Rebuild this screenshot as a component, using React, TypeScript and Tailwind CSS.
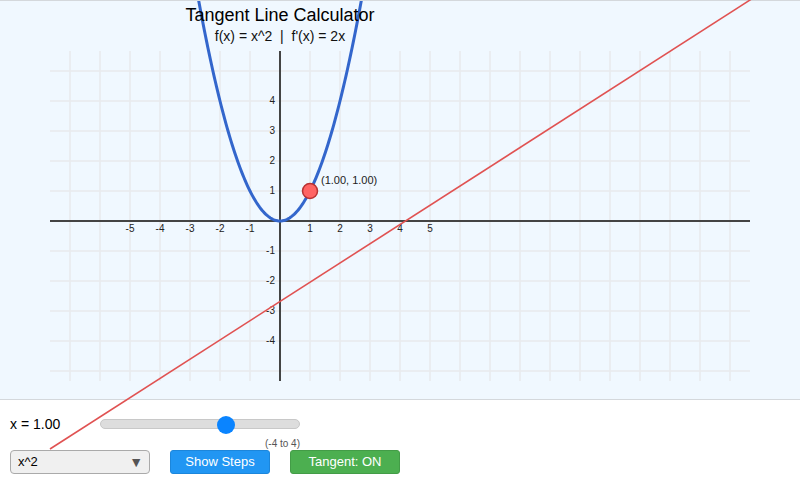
import React from "react";

const OX = 280;
const OY = 220;
const S = 30;

function parabolaPath() {
  const pts: string[] = [];
  for (let x = -2.76; x <= 2.761; x += 0.04) {
    const px = OX + x * S;
    const py = OY - x * x * S;
    pts.push(`${pts.length ? "L" : "M"}${px.toFixed(2)},${py.toFixed(2)}`);
  }
  return pts.join(" ");
}

function Graph() {
  const vLines = [];
  for (let k = -7; k <= 15; k++) vLines.push(OX + k * S);
  const hLines = [];
  for (let k = -5; k <= 5; k++) hLines.push(OY + k * S);
  const xLabels = [-5, -4, -3, -2, -1, 1, 2, 3, 4, 5];
  const yLabels = [4, 3, 2, 1, -1, -2, -3, -4];

  return (
    <svg width="800" height="398" className="block">
      {vLines.map((x) => (
        <line key={"v" + x} x1={x} y1={50} x2={x} y2={380} stroke="#e8eaec" strokeWidth={1.5} />
      ))}
      {hLines.map((y) => (
        <line key={"h" + y} x1={50} y1={y} x2={750} y2={y} stroke="#e8eaec" strokeWidth={1.5} />
      ))}
      <line x1={50} y1={OY} x2={750} y2={OY} stroke="#444" strokeWidth={2} />
      <line x1={OX} y1={50} x2={OX} y2={380} stroke="#444" strokeWidth={2} />
      {xLabels.map((n) => (
        <text key={"xl" + n} x={OX + n * S} y={OY + 11} fontSize={10} textAnchor="middle" fill="#222">
          {n}
        </text>
      ))}
      {yLabels.map((n) => (
        <text key={"yl" + n} x={OX - 5} y={OY - n * S + 3} fontSize={10} textAnchor="end" fill="#222">
          {n}
        </text>
      ))}
      <path d={parabolaPath()} fill="none" stroke="#3366cc" strokeWidth={3} />
      <circle cx={310} cy={190} r={7.5} fill="#ff6464" stroke="#b83232" strokeWidth={1.5} />
      <text x={321} y={182.5} fontSize={11} fill="#222">
        (1.00, 1.00)
      </text>
      <text x={280} y={19.5} fontSize={18} textAnchor="middle" fill="#000">
        Tangent Line Calculator
      </text>
      <text x={280} y={39.5} fontSize={14} textAnchor="middle" fill="#111">
        f(x) = x^2 &nbsp;|&nbsp; f'(x) = 2x
      </text>
    </svg>
  );
}

export default function App() {
  return (
    <div
      className="relative w-[800px] h-[482px] overflow-hidden bg-white"
      style={{ fontFamily: '"Liberation Sans", Arial, sans-serif' }}
    >
      <div className="h-[400px] bg-[#f0f8ff] border-t border-b border-[#d4d8dc]">
        <Graph />
      </div>

      {/* tangent line runs over both the graph and the controls */}
      <svg width="800" height="482" className="absolute inset-0 pointer-events-none">
        <line x1={50} y1={449} x2={751} y2={-0.6} stroke="#e05252" strokeWidth={1.6} />
      </svg>

      <div className="relative px-[10px] pt-[18px]">
        <div className="flex items-center h-[12px]">
          <span className="w-[90px] text-[14px] text-black">x = 1.00</span>
          <div className="relative w-[200px] h-[10px] rounded-full bg-[#dddddd] border border-[#c8c8c8]">
            <div className="absolute left-[116px] top-[-4px] w-[18px] h-[18px] rounded-full bg-[#0a84ff]" />
          </div>
        </div>
        <div className="flex justify-end w-[290px] mt-[7px] h-[13px]">
          <span className="text-[10px] text-[#555] leading-[13px]">(-4 to 4)</span>
        </div>
        <div className="flex items-center gap-[20px]">
          <div className="flex items-center justify-between w-[140px] h-[24px] pl-[7px] pr-[6px] bg-[#f0f0f0] border border-[#aaaaaa] rounded-[4px]">
            <span className="text-[13px] text-black">x^2</span>
            <span className="text-[14px] text-[#555] leading-none">▼</span>
          </div>
          <button className="w-[100px] h-[24px] bg-[#2196f3] border border-[#1c86db] rounded-[3px] text-white text-[13px]">
            Show Steps
          </button>
          <button className="w-[110px] h-[24px] bg-[#4caf50] border border-[#439c47] rounded-[3px] text-white text-[13px]">
            Tangent: ON
          </button>
        </div>
      </div>
    </div>
  );
}
